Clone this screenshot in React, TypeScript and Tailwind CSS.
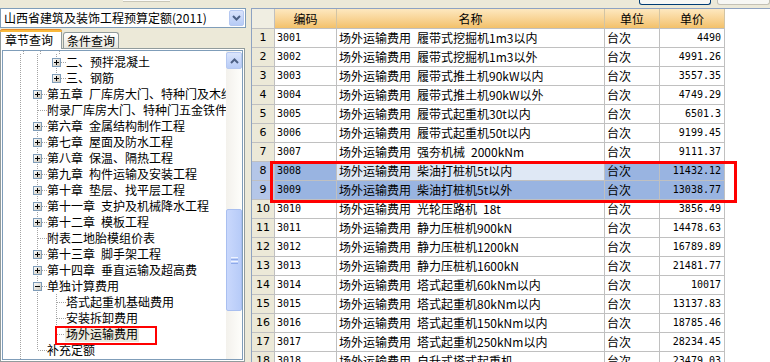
import React from "react";

type Node = { lv: 0 | 1 | 2; text: string; exp?: "+" | "-"; last?: boolean; sel?: boolean };

const tree: Node[] = [
  { lv: 2, text: "二、预拌混凝土", exp: "+" },
  { lv: 2, text: "三、钢筋", exp: "+", last: true },
  { lv: 1, text: "第五章 厂库房大门、特种门及木结构工程", exp: "+" },
  { lv: 1, text: "附录厂库房大门、特种门五金铁件表" },
  { lv: 1, text: "第六章 金属结构制作工程", exp: "+" },
  { lv: 1, text: "第七章 屋面及防水工程", exp: "+" },
  { lv: 1, text: "第八章 保温、隔热工程", exp: "+" },
  { lv: 1, text: "第九章 构件运输及安装工程", exp: "+" },
  { lv: 1, text: "第十章 垫层、找平层工程", exp: "+" },
  { lv: 1, text: "第十一章 支护及机械降水工程", exp: "+" },
  { lv: 1, text: "第十二章 模板工程", exp: "+" },
  { lv: 1, text: "附表二地胎模组价表" },
  { lv: 1, text: "第十三章 脚手架工程", exp: "+" },
  { lv: 1, text: "第十四章 垂直运输及超高费", exp: "+" },
  { lv: 1, text: "单独计算费用", exp: "-" },
  { lv: 2, text: "塔式起重机基础费用" },
  { lv: 2, text: "安装拆卸费用" },
  { lv: 2, text: "场外运输费用", last: true, sel: true },
  { lv: 1, text: "补充定额", last: true },
  { lv: 0, text: "装饰工程", exp: "+", last: true },
];

const items: [string, string, string][] = [
  ["3001", "履带式挖掘机1m3以内", "4490"],
  ["3002", "履带式挖掘机1m3以外", "4991.26"],
  ["3003", "履带式推土机90kW以内", "3557.35"],
  ["3004", "履带式推土机90kW以外", "4749.29"],
  ["3005", "履带式起重机30t以内", "6501.3"],
  ["3006", "履带式起重机50t以内", "9199.45"],
  ["3007", "强夯机械 2000kNm", "9111.37"],
  ["3008", "柴油打桩机5t以内", "11432.12"],
  ["3009", "柴油打桩机5t以外", "13038.77"],
  ["3010", "光轮压路机 18t", "3856.49"],
  ["3011", "静力压桩机900kN", "14478.63"],
  ["3012", "静力压桩机1200kN", "16789.89"],
  ["3013", "静力压桩机1600kN", "21481.77"],
  ["3014", "塔式起重机60kNm以内", "10017"],
  ["3015", "塔式起重机80kNm以内", "13137.83"],
  ["3016", "塔式起重机150kNm以内", "18785.46"],
  ["3017", "塔式起重机250kNm以内", "28234.45"],
  ["3018", "自升式塔式起重机", "23479.03"],
];

// indent columns of the tree: width and line position inside
const cols = [
  { w: 25, c: 17 },
  { w: 19, c: 9 },
  { w: 19, c: 9 },
];

const DOT = "#a3a3a3";

// words separated by a half-width gap, as SimSun draws them
const Words = ({ text }: { text: string }) => (
  <>
    {text.split(" ").map((p, i) => (
      <span key={i} className={i ? "ml-[6px]" : ""}>
        {p}
      </span>
    ))}
  </>
);

const TreeCell = ({ w, c, up, down, branch, exp }: { w: number; c: number; up?: boolean; down?: boolean; branch?: boolean; exp?: "+" | "-" }) => (
  <svg width={w} height={16} className="shrink-0">
    {up && <line x1={c + 0.5} y1={0} x2={c + 0.5} y2={8} stroke={DOT} strokeDasharray="1 1" />}
    {down && <line x1={c + 0.5} y1={8} x2={c + 0.5} y2={16} stroke={DOT} strokeDasharray="1 1" />}
    {branch && <line x1={c + 1} y1={8.5} x2={w} y2={8.5} stroke={DOT} strokeDasharray="1 1" />}
    {exp && (
      <>
        <defs>
          <linearGradient id="bx" x1="0" y1="0" x2="1" y2="1">
            <stop offset="0" stopColor="#ffffff" />
            <stop offset="1" stopColor="#c9c4b6" />
          </linearGradient>
        </defs>
        <rect x={c - 3.5} y={4.5} width={8} height={8} fill="url(#bx)" stroke="#7f9db9" />
        <line x1={c - 2} y1={8.5} x2={c + 3} y2={8.5} stroke="#000" />
        {exp === "+" && <line x1={c + 0.5} y1={6} x2={c + 0.5} y2={11} stroke="#000" />}
      </>
    )}
  </svg>
);

const TreeRow = ({ n }: { n: Node }) => (
  <div className="relative flex h-[16px] whitespace-nowrap">
    {cols.slice(0, n.lv).map((col, k) => (
      <TreeCell key={k} w={col.w} c={col.c} up down />
    ))}
    <TreeCell w={cols[n.lv].w} c={cols[n.lv].c} up down={!n.last} branch exp={n.exp} />
    <span className={`min-w-0 overflow-hidden leading-[16px] ${n.sel ? "-ml-px px-px bg-[#ebe9dd]" : ""}`}>
      <Words text={n.text} />
    </span>
    {n.sel && <div className="absolute left-[52px] top-0 w-[102px] h-[19px] border-2 border-[#f00] z-10" />}
  </div>
);

const Chevron = ({ up }: { up?: boolean }) => (
  <svg width="9" height="6" viewBox="0 0 9 6">
    <path d={up ? "M1 5 L4.5 1.5 L8 5" : "M1 1 L4.5 4.5 L8 1"} fill="none" stroke="#4d6185" strokeWidth="2" />
  </svg>
);

const heads = [
  { t: "编码", w: "w-[62px]" },
  { t: "名称", w: "w-[268px]" },
  { t: "单位", w: "w-[55px]" },
  { t: "单价", w: "w-[65px]" },
];

const SEL = "bg-[#99b4e1]";

export default function App() {
  return (
    <div className="w-[770px] h-[362px] overflow-hidden bg-[#ece9d8] flex flex-col text-[12px] text-black font-['Noto_Sans_CJK_SC',sans-serif]">
      {/* bottoms of the toolbar above */}
      <div className="h-[8px] flex shrink-0">
        <div className="ml-[123px] w-[47px] h-[2px] bg-[#fbfbf8] border-b border-[#c9c6b8]" />
        <div className="ml-[469px] w-[72px] h-[5px] bg-[#f7f7f4] border border-t-0 border-[#003c74] rounded-b-[3px]" />
        <div className="ml-[6px] w-[53px] h-[5px] bg-[#f7f7f4] border border-t-0 border-[#c3c1b6] rounded-b-[3px]" />
      </div>

      <div className="flex flex-1 min-h-0">
        {/* left: quota book + tree */}
        <div className="w-[251px] flex flex-col shrink-0">
          <div className="h-[20px] w-[246px] border border-[#7f9db9] bg-white flex items-center">
            <span className="flex-1 pl-[3px] leading-[16px]">山西省建筑及装饰工程预算定额(2011)</span>
            <div className="w-[15px] h-[16px] mr-px rounded-[2px] border border-[#b5c8f1] bg-linear-to-b from-[#d9e3fb] to-[#b6cbf6] flex items-center justify-center">
              <Chevron />
            </div>
          </div>

          <div className="relative z-10 h-[21px] -mb-px flex items-end">
            <div className="w-[62px] h-[20px] bg-white border border-b-0 border-[#919b9c] rounded-t-[3px] flex flex-col">
              <div className="h-[3px] -mx-px -mt-px bg-[#f9b93c] border-t border-[#e68b2c] rounded-t-[3px]" />
              <div className="pl-[4px] leading-[16px]">章节查询</div>
            </div>
            <div className="w-[56px] h-[16px] mb-px ml-px border border-b-0 border-[#919b9c] rounded-t-[3px] bg-linear-to-b from-white to-[#e8e6dc] pl-[3px] leading-[15px]">
              条件查询
            </div>
          </div>

          <div className="flex-1 min-h-0 w-[245px] border border-[#919b9c] bg-white p-px">
            <div className="h-full border border-[#7f9db9] flex">
              <div className="flex-1 min-w-0 overflow-hidden">
                <svg width="66" height="3" className="block">
                  <line x1="20.5" y1="0" x2="20.5" y2="3" stroke={DOT} strokeDasharray="1 1" />
                  <line x1="37.5" y1="0" x2="37.5" y2="3" stroke={DOT} strokeDasharray="1 1" />
                  <line x1="56.5" y1="0" x2="56.5" y2="3" stroke={DOT} strokeDasharray="1 1" />
                </svg>
                {tree.map((n, i) => (
                  <TreeRow key={i} n={n} />
                ))}
              </div>

              <div className="w-[16px] shrink-0 flex flex-col bg-linear-to-r from-[#f3f1ec] to-[#fefefb]">
                <div className="h-[17px] mt-px rounded-[2px] border border-[#b5c8f1] bg-linear-to-b from-[#dbe5fc] to-[#b8ccf6] flex items-center justify-center">
                  <Chevron up />
                </div>
                <div className="h-[140px]" />
                <div className="h-[102px] rounded-[2px] border border-[#a9bff0] bg-linear-to-r from-[#c9d8fc] to-[#b7cbf8] flex flex-col items-center justify-center gap-px">
                  <div className="w-[7px] h-px bg-[#eef3fe]" />
                  <div className="w-[7px] h-px bg-[#8faaea]" />
                  <div className="w-[7px] h-px bg-[#eef3fe]" />
                  <div className="w-[7px] h-px bg-[#8faaea]" />
                </div>
              </div>
            </div>
          </div>
        </div>

        {/* right: quota grid */}
        <div className="relative flex-1 bg-white border-t border-l border-[#8ea3c2]">
          <div className="w-[473px]">
            <div className="flex h-[20px] border-b border-[#c0c0c0]">
              <div className="w-[23px] bg-[#f0eee2] border-r border-[#c0c0c0]" />
              {heads.map((h) => (
                <div key={h.t} className={`${h.w} bg-linear-to-b from-[#fde8bf] to-[#f3c16a] border-r border-[#d2c4a4] text-center leading-[19px]`}>
                  {h.t}
                </div>
              ))}
            </div>

            {items.map(([code, name, price], i) => {
              const n = i + 1;
              const on = n === 8 || n === 9;
              return (
                <div key={code} className="flex h-[19px] border-b border-[#c0c0c0] leading-[18px] whitespace-nowrap">
                  <div className={`w-[23px] border-r border-[#c0c0c0] text-center font-['DejaVu_Sans',sans-serif] text-[11px] ${on ? "bg-[#b4c6e8]" : "bg-[#ece9d8]"}`}>
                    {n}
                  </div>
                  <div className={`w-[62px] border-r border-[#c0c0c0] pl-[2px] font-['DejaVu_Sans_Mono',monospace] text-[10px] ${on ? SEL : ""}`}>
                    {code}
                  </div>
                  <div className={`w-[268px] border-r border-[#c0c0c0] pl-[2px] overflow-hidden ${n === 8 ? "bg-[#dfe8f5]" : on ? SEL : ""}`}>
                    <Words text={`场外运输费用 ${name}`} />
                  </div>
                  <div className={`w-[55px] border-r border-[#c0c0c0] pl-[2px] ${on ? SEL : ""}`}>台次</div>
                  <div className={`w-[65px] border-r border-[#c0c0c0] pr-[3px] text-right font-['DejaVu_Sans_Mono',monospace] text-[10px] ${on ? SEL : ""}`}>
                    {price}
                  </div>
                </div>
              );
            })}
          </div>

          {/* red mark round rows 8 and 9 */}
          <div className="absolute left-[18px] top-[152px] w-[467px] h-[42px] border-[3px] border-[#f00]" />
        </div>
      </div>
    </div>
  );
}
